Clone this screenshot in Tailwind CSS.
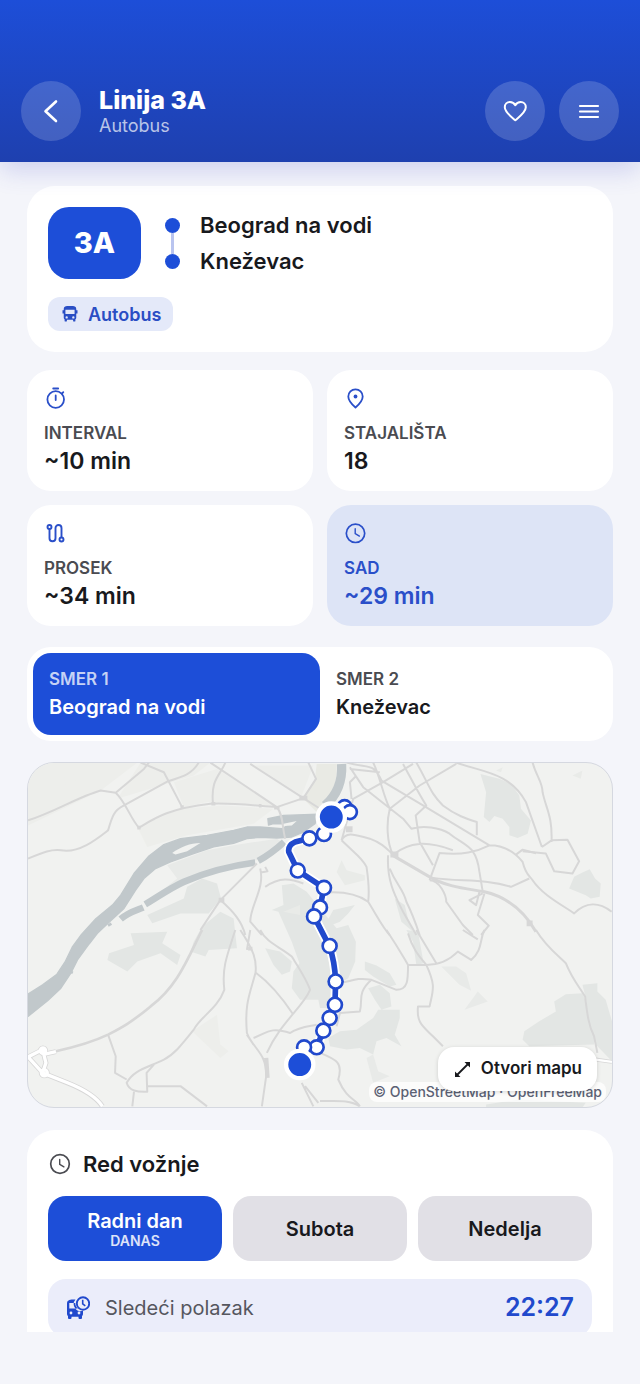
<!DOCTYPE html>
<html lang="sr-Latn">
<head>
<meta charset="utf-8">
<meta name="viewport" content="width=device-width, initial-scale=1">
<title>Linija 3A</title>
<script src="https://cdn.jsdelivr.net/npm/@tailwindcss/browser@4"></script>
</head>
<body class="flex h-screen flex-col bg-[#f4f5fa] font-['Inter','Liberation_Sans',sans-serif] text-[#18191d]">

<header class="relative z-10 flex shrink-0 items-center gap-3.5 bg-linear-to-b from-[#1d4ed8] to-[#1e40af] px-[21px] pt-[81px] pb-[21px] text-white shadow-[0_8px_24px_rgba(55,65,200,0.2)]">
  <button aria-label="Nazad" class="flex size-[60px] items-center justify-center rounded-full bg-white/17">
    <svg class="size-6" viewBox="0 0 24 24" fill="none" stroke="currentColor" stroke-width="2.6" stroke-linecap="round" stroke-linejoin="round"><path d="M17 2.500 6.500 12.300 17 22"/></svg>
  </button>
  <div class="flex-1 pt-0.5 pl-1">
    <h1 class="text-[25px] leading-7 font-extrabold">Linija 3A</h1>
    <p class="text-[18px] leading-6 text-white/70">Autobus</p>
  </div>
  <button aria-label="Omiljeno" class="flex size-[60px] items-center justify-center rounded-full bg-white/17">
    <svg class="size-6" viewBox="0 0 24 24" fill="none" stroke="currentColor" stroke-width="2" stroke-linejoin="round"><path d="M12.300 21.300C8 17.500 1.800 13 1.800 8.200C1.800 5.200 4.100 3 6.900 3C9.200 3 11.200 4.200 12.300 6.200C13.400 4.200 15.400 3 17.700 3C20.500 3 22.800 5.200 22.800 8.200C22.800 13 16.600 17.500 12.300 21.300Z"/></svg>
  </button>
  <button aria-label="Meni" class="flex size-[60px] items-center justify-center rounded-full bg-white/17">
    <svg class="size-6" viewBox="0 0 24 24" fill="none" stroke="currentColor" stroke-width="2.200" stroke-linecap="round"><path d="M3 7h18M3 12.500h18M3 18h18"/></svg>
  </button>
</header>

<main class="flex min-h-0 flex-1 flex-col overflow-hidden px-[27px] pt-6">

  <section class="shrink-0 rounded-[28px] bg-white p-[21px]">
    <div class="flex items-center">
      <div class="flex h-[72px] w-[93px] items-center justify-center rounded-[21px] bg-[#1d4ed8] text-[29px] font-extrabold text-white">3A</div>
      <div class="ml-6 flex flex-col items-center" aria-hidden="true">
        <span class="size-[15px] rounded-full bg-[#1d4ed8]"></span>
        <span class="h-[21px] w-[3px] bg-[#b9c4ef]"></span>
        <span class="size-[15px] rounded-full bg-[#1d4ed8]"></span>
      </div>
      <div class="ml-5 text-[22px] leading-9 font-semibold">
        <p>Beograd na vodi</p>
        <p>Kneževac</p>
      </div>
    </div>
    <div class="mt-[18px] flex">
      <span class="flex h-[34px] items-center gap-2 rounded-xl bg-[#e4e9f9] px-3 text-[18px] font-semibold text-[#2a4ec4]">
        <svg class="size-5" viewBox="0 0 24 24" fill="currentColor"><path fill-rule="evenodd" d="M17.500 12h-11V7h11zM16 17.500a1.400 1.400 0 1 1 0-2.800 1.400 1.400 0 0 1 0 2.800zM8 17.500a1.400 1.400 0 1 1 0-2.800 1.400 1.400 0 0 1 0 2.800zM4.500 16.500c0 .88.390 1.400 1 1.900V20a1 1 0 0 0 1 1h.8a1 1 0 0 0 1-1v-1h7.400v1a1 1 0 0 0 1 1h.8a1 1 0 0 0 1-1v-1.600c.61-.5 1-1.020 1-1.900V6c0-2.600-2-3.500-4-3.500h-7c-2 0-4 .9-4 3.500z"/><path d="M3 7.500h2v4H3zM19 7.500h2v4h-2z"/></svg>
        Autobus
      </span>
    </div>
  </section>

  <section class="mt-[18px] grid shrink-0 grid-cols-2 gap-3.5">
    <div class="rounded-3xl bg-white px-[17px] pt-[17px] pb-4">
      <svg class="size-6 text-[#2a4fc9]" viewBox="0 0 24 24" fill="none" stroke="currentColor" stroke-width="1.800" stroke-linecap="round"><circle cx="11.700" cy="12.500" r="8.300"/><path d="M9.200 1.500h5M11.700 8.500v4.500M18 6.500l1.300-1.300"/></svg>
      <p class="mt-2.5 text-[17px] leading-6 font-semibold text-[#4a4b51]">INTERVAL</p>
      <p class="mt-0.5 text-[23px] leading-7 font-semibold">~10 min</p>
    </div>
    <div class="rounded-3xl bg-white px-[17px] pt-[17px] pb-4">
      <svg class="size-6 text-[#2a4fc9]" viewBox="0 0 24 24" fill="none" stroke="currentColor" stroke-width="1.800" stroke-linejoin="round"><path d="M11.500 20.500C8 17.500 4.300 13.500 4.300 9.500a7.200 7.200 0 0 1 14.400 0C18.700 13.500 15 17.500 11.500 20.500Z"/><circle cx="11.500" cy="9.500" r="1.900" fill="currentColor" stroke="none"/></svg>
      <p class="mt-2.5 text-[17px] leading-6 font-semibold text-[#4a4b51]">STAJALIŠTA</p>
      <p class="mt-0.5 text-[23px] leading-7 font-semibold">18</p>
    </div>
    <div class="rounded-3xl bg-white px-[17px] pt-[17px] pb-4">
      <svg class="size-6 text-[#2a4fc9]" viewBox="0 0 24 24" fill="none" stroke="currentColor" stroke-width="1.900"><circle cx="5.500" cy="5" r="2"/><circle cx="17.500" cy="17.500" r="2"/><path d="M5.500 7v9.200a3 3 0 0 0 6 0V6a3 3 0 0 1 6 0V15.500"/></svg>
      <p class="mt-2.5 text-[17px] leading-6 font-semibold text-[#4a4b51]">PROSEK</p>
      <p class="mt-0.5 text-[23px] leading-7 font-semibold">~34 min</p>
    </div>
    <div class="rounded-3xl bg-[#dde4f6] px-[17px] pt-[17px] pb-4 text-[#2a4fc9]">
      <svg class="size-6" viewBox="0 0 24 24" fill="none" stroke="currentColor" stroke-width="1.700" stroke-linecap="round"><circle cx="11.500" cy="11.300" r="9.200"/><path stroke-width="1.400" d="M11.200 6.800v4.800l4.200 2.500"/></svg>
      <p class="mt-2.5 text-[17px] leading-6 font-semibold">SAD</p>
      <p class="mt-0.5 text-[23px] leading-7 font-semibold">~29 min</p>
    </div>
  </section>

  <section class="mt-[21px] grid shrink-0 grid-cols-2 rounded-3xl bg-white p-1.5">
    <button aria-pressed="true" class="rounded-[18px] bg-[#1d4ed8] px-4 py-3.5 text-left text-white">
      <span class="block text-[17px] leading-6 font-semibold text-white/75">SMER 1</span>
      <span class="mt-0.5 block text-[20px] leading-7 font-semibold">Beograd na vodi</span>
    </button>
    <button aria-pressed="false" class="rounded-[18px] px-4 py-3.5 text-left">
      <span class="block text-[17px] leading-6 font-semibold text-[#4a4b51]">SMER 2</span>
      <span class="mt-0.5 block text-[20px] leading-7 font-semibold">Kneževac</span>
    </button>
  </section>

  <section class="relative mt-[21px] h-[346px] shrink-0 overflow-hidden rounded-[27px] border border-[#d5d8e0] bg-[#f1f2f0]">
    <svg class="size-full" viewBox="21 21 1758 1038" preserveAspectRatio="xMidYMid slice" fill="none" aria-label="Mapa linije" role="img">
      <!-- built-up areas and parks -->
      <g fill="#edeeeb">
        <path d="M21 210 240 105 350 21H21ZM290 130 520 60 570 21H360ZM350 215 480 160 610 150 760 160 700 205 500 240 380 275ZM460 80 590 40 760 150 560 140 490 155ZM700 30H880L845 120Z"/>
        <path fill="#e8eae8" d="M470 370 440 330 560 285 640 270 770 250 790 262 710 315 600 335 500 370 400 425Z"/>
        <path d="M130 65 160 55 165 80 135 88ZM590 780 600 870 625 890 600 910 515 830Z"/>
      </g>
      <path fill="#e9eae4" d="M890 25H950C953 80 935 120 915 140L890 170 850 130 885 70Z"/>
      <g fill="#e3e6e4">
        <path d="M380 480 490 430 500 395 545 370 590 385 602 430 565 475 480 475 395 505ZM520 560 545 515 600 470 640 490 650 580 565 585 555 605 510 590Z"/>
        <path d="M330 535 440 530 425 565 480 600 470 630 420 595 350 620 320 650 260 615 265 595 340 570Z"/>
        <path d="M785 390 820 385 860 410 900 460 950 520 985 510 1008 560 1006 620 985 670 950 690 925 760 900 760 895 735 840 735 815 700 820 650 838 625 815 560 775 470 755 465 790 450Z"/>
        <path d="M735 580 780 590 815 620 810 650 785 660 760 630Z"/>
        <path d="M1383 55 1440 70 1475 85 1500 120 1505 160 1535 195 1525 235 1495 248 1470 240 1470 215 1450 190 1425 182 1410 200 1393 185 1400 110Z"/>
        <path d="M1665 365 1690 352 1712 342 1728 370 1745 385 1742 425 1715 430 1700 420 1650 400Z"/>
        <path d="M1035 620 1070 632 1110 655 1130 690 1110 695 1060 665 1035 645ZM1045 700 1080 690 1110 715 1115 755 1085 765 1065 735ZM925 850 960 830 1010 825 1060 790 1075 765 1140 765 1140 790 1125 840 1145 875 1100 850 1070 860 1060 900 1020 880 980 885 930 875Z"/>
        <path fill="#e8eae8" d="M1265 635 1310 635 1340 655 1355 708 1320 690ZM1335 765 1375 710 1405 740ZM1040 910 1060 900 1075 950 1110 965 1060 985Z"/>
        <path d="M1510 855 1515 830 1560 800 1610 770 1605 740 1640 718 1690 715 1705 750 1730 760 1725 870 1530 875ZM1690 690 1735 685 1735 710 1760 735 1779 800V920L1730 870 1700 730Z"/>
        <path d="M1160 525 1195 530 1212 625 1190 630 1180 560ZM1125 430 1155 450 1165 490 1180 530 1145 500ZM910 520 940 465 1005 450 985 475 960 500ZM1400 1050 1500 1035 1700 1045 1690 1059H1400Z"/>
        <path fill="#e9ebe8" d="M950 350 965 315 980 345 1035 360 1035 375 975 390ZM790 470 840 450 840 480ZM1430 45 1450 35 1445 50ZM1660 60 1690 45 1685 70Z"/>
      </g>
      <!-- rivers -->
      <g>
        <path fill="#c1c8cb" stroke="#c1c8cb" stroke-width="4" stroke-linejoin="round" d="M21 718 65 690 108 658 132 622 155 575 182 538 225 491 275 450 300 420 340 355 385 302 430 268 480 250 560 240 640 225 680 215 720 215 785 220 815 205 760 205 745 209 743 190 790 180 895 176 885 205 850 230 815 245 770 248 720 246 680 250 640 264 580 275 520 295 450 320 405 340 370 370 345 405 310 460 270 497 230 535 205 567 170 615 150 655 120 700 80 738 21 785Z"/>
        <path fill="#f1f2f0" d="M455 293C480 275 510 263 540 263L500 288 465 298ZM790 205 830 197 815 210 790 212Z"/>
        <path stroke="#c1c8cb" stroke-width="20" d="M300 492C325 470 350 465 368 457M374 448C420 420 450 398 490 380C560 350 630 332 705 322M714 317C745 300 770 280 792 260"/>
        <path stroke="#c1c8cb" stroke-width="28" d="M915 150C950 120 968 80 965 25"/>
        <path stroke="#c1c8cb" stroke-width="8" d="M262 512 272 506M148 650 156 654"/>
      </g>
      <!-- streets, north-west -->
      <g stroke="#d7d7d7" stroke-width="6" stroke-linejoin="round">
        <path d="M21 195C100 170 170 125 240 105L285 112C315 140 330 190 355 217M285 112 370 40 385 21M21 310C70 290 90 282 120 285C175 295 230 250 262 225C275 180 280 165 310 150L440 78C490 62 515 55 535 21M360 21 430 50 485 155M355 217C400 190 440 160 570 145C640 142 700 150 770 155L850 128 888 70 865 21M570 21 770 155M615 21C600 60 570 70 578 145M690 25 850 128 900 160M770 155C790 180 785 210 795 250M710 325 600 435 540 525M600 435C640 470 665 500 675 540M720 340C735 400 690 450 690 500L725 540M735 395C780 365 810 370 850 385M735 335 742 348 722 352"/>
        <path stroke-width="14" d="M838 128H862M595 435H612"/>
        <path stroke-width="11" d="M573 145H585M480 155H490M716 151H724M350 217H360M762 157H778"/>
      </g>
      <!-- streets, north-east -->
      <g transform="translate(900 0)" stroke="#d7d7d7" stroke-width="6" stroke-linejoin="round">
        <path d="M80 21C150 40 160 20 185 75L310 150 510 270M160 21C180 60 190 120 210 160C200 200 200 260 220 298M210 160 300 90 410 25M65 255 100 130 190 80 280 25M65 255C80 225 110 240 150 250C190 265 200 280 220 298M65 255C100 290 130 310 140 335C145 370 150 400 145 440C170 480 190 520 210 540M90 35 130 95 250 190 275 220C310 210 360 215 390 235C440 275 470 270 480 350L490 410M250 25C280 80 300 120 320 150L288 180 300 260 340 330M290 21C330 90 330 110 370 150C410 180 440 190 472 200V240M410 21C490 50 570 50 620 140L668 275M640 21C650 60 670 80 670 110C680 160 700 180 697 260M668 275 697 255 745 253 780 318 760 355 705 348 680 295 610 288M510 270C560 270 590 295 610 320C620 360 630 360 640 375C670 420 730 450 765 475C800 440 840 440 878 470M510 270C470 290 430 300 360 293L330 375M220 298C270 260 320 255 400 285M90 40 180 50M95 130 90 80 110 60"/>
        <path d="M210 340C230 390 250 400 260 440C280 480 290 510 300 540M205 300C200 380 230 430 250 470L290 540M330 375C360 375 380 420 380 440L430 510 460 540M340 368C420 380 500 370 575 395L630 370M145 440C110 415 70 410 25 412M490 415 450 435 470 450 480 410M495 415 475 480 508 512 485 540M590 298 610 283 650 294"/>
        <path stroke-width="9" d="M215 298 330 365C380 395 440 400 495 410C560 425 610 460 650 530"/>
        <path stroke-width="18" d="M212 298H236M622 505H640M78 222H98"/>
      </g>
      <!-- streets, south-west -->
      <g transform="translate(0 525)" stroke="#d7d7d7" stroke-width="6" stroke-linejoin="round">
        <path stroke-width="8" d="M545 0C500 90 470 170 390 230C330 280 300 295 262 315C210 340 150 355 105 365"/>
        <path d="M645 0C615 90 605 120 612 180C590 240 540 260 520 300C480 350 460 375 430 390C380 415 340 420 318 460C325 485 350 488 380 487L378 430 400 405M262 315 285 380 283 430 318 450M380 470H480L560 531M340 487 335 531M660 0C700 60 710 90 706 128C690 190 672 220 680 310C700 360 740 370 738 440L725 531M690 0 680 60M706 128C750 160 790 210 820 255M720 0C740 40 780 50 815 80C840 120 860 150 870 180C850 230 780 280 740 370M700 325C740 310 750 290 810 310C840 290 870 290 890 285M680 315 700 345M845 460 880 531M855 470 895 520"/>
        <path stroke-width="13" d="M738 385 742 445M690 50V62"/>
        <g stroke="#d7d7d7" stroke-width="15" stroke-linejoin="round">
          <path d="M21 382 65 360 75 400 65 430M21 382 65 430 140 460C190 480 225 500 245 531M65 375 105 366"/>
          <circle cx="66" cy="363" r="8"/><circle cx="70" cy="430" r="9"/>
        </g>
        <g stroke="#ffffff" stroke-width="10" stroke-linejoin="round">
          <path d="M21 382 65 360 75 400 65 430M21 382 65 430 140 460C190 480 225 500 245 531M65 375 105 366"/>
          <circle cx="66" cy="363" r="8"/><circle cx="70" cy="430" r="9"/>
        </g>
      </g>
      <!-- streets, south-east -->
      <g transform="translate(900 525)" stroke="#d7d7d7" stroke-width="6" stroke-linejoin="round">
        <path d="M200 0C240 60 250 80 265 105C265 150 265 180 230 180L155 150C100 140 90 160 50 160M155 150C110 190 130 210 120 245L60 250 50 290M265 105H320C360 105 390 90 415 65L455 90C490 60 480 30 495 0M265 10C280 60 300 80 320 105C350 170 340 180 330 230H295C290 280 310 290 340 320L370 350M290 0 350 100M430 0 475 28M650 0C680 50 720 80 740 100C760 150 780 170 798 200C805 260 810 290 825 320L835 370M0 370C50 390 70 400 55 450C80 510 110 510 120 531M0 515C50 515 90 510 120 531"/>
        <path stroke-width="12" d="M830 390 879 397"/><path stroke="#fff" stroke-width="7" d="M830 390 879 397"/>
      </g>
      <!-- line 3A -->
      <g stroke-linejoin="round" stroke-linecap="round">
        <path stroke="#ffffff" stroke-width="28" d="M988 168 934 185 912 235 868 249 825 260Q803 270 806 290L833 346 912 398 900 457 882 484 928 573Q945 620 947 680L945 750 929 790 910 828 890 878 852 878 839 930"/>
        <path stroke="#2149cc" stroke-width="17" d="M988 168 934 185 912 235 868 249 825 260Q803 270 806 290L833 346 912 398 900 457 882 484 928 573Q945 620 947 680L945 750 929 790 910 828 890 878 852 878 839 930"/>
      </g>
      <g fill="#ffffff" stroke="#2149cc" stroke-width="8">
        <circle cx="974" cy="155" r="21"/><circle cx="990" cy="170" r="21"/><circle cx="912" cy="236" r="21"/><circle cx="868" cy="249" r="21"/><circle cx="833" cy="346" r="21"/><circle cx="912" cy="398" r="21"/><circle cx="900" cy="457" r="21"/><circle cx="882" cy="484" r="21"/><circle cx="929" cy="573" r="21"/><circle cx="947" cy="680" r="21"/><circle cx="945" cy="750" r="21"/><circle cx="929" cy="790" r="21"/><circle cx="910" cy="828" r="21"/><circle cx="890" cy="878" r="21"/><circle cx="852" cy="878" r="21"/>
      </g>
      <g fill="#1d4ed8" stroke="#ffffff" stroke-width="13">
        <circle cx="934" cy="185" r="41"/><circle cx="839" cy="930" r="41"/>
      </g>
    </svg>
    <p class="absolute right-1.5 bottom-[5px] rounded-lg bg-white/75 px-1 text-[14px] leading-5 font-medium text-[#5b6174]">© OpenStreetMap · OpenFreeMap</p>
    <button class="absolute right-[15px] bottom-4 flex h-11 items-center gap-2 rounded-2xl bg-white px-[15px] text-[17px] font-semibold shadow-[0_1px_4px_rgba(0,0,0,0.15)]">
      <svg class="size-5" viewBox="0 0 20 20" fill="currentColor" stroke="currentColor" stroke-width="1.800"><path d="M4 16 15 5"/><path stroke="none" d="M11.500 3H17v5.500zM2 12.500V18h5.500z"/></svg>
      Otvori mapu
    </button>
  </section>

  <section class="mt-[22px] shrink-0 rounded-[28px] bg-white p-[21px]">
    <h2 class="flex items-center gap-[11px] text-[22px] leading-[26px] font-semibold">
      <svg class="size-6 text-[#4a4b51]" viewBox="0 0 24 24" fill="none" stroke="currentColor" stroke-width="1.700" stroke-linecap="round"><circle cx="12" cy="12" r="9.300"/><path stroke-width="1.400" d="M11.700 7.500v4.800l4.200 2.500"/></svg>
      Red vožnje
    </h2>
    <div class="mt-[19px] grid grid-cols-3 gap-[11px] text-[20px] font-semibold">
      <button aria-pressed="true" class="flex h-[65px] flex-col items-center justify-center rounded-[18px] bg-[#1d4ed8] text-white">
        <span class="leading-6">Radni dan</span>
        <span class="text-[14px] leading-4 text-white/85">DANAS</span>
      </button>
      <button aria-pressed="false" class="h-[65px] rounded-[18px] bg-[#e1e0e6]">Subota</button>
      <button aria-pressed="false" class="h-[65px] rounded-[18px] bg-[#e1e0e6]">Nedelja</button>
    </div>
    <div class="mt-[18px] flex h-[58px] items-center rounded-[18px] bg-[#ebedfa] px-[18px]">
      <svg class="size-6 text-[#2149cc]" viewBox="0 0 24 24" fill="currentColor"><path fill-rule="evenodd" d="M9.500 3.500H7C3 3.500 1 4.500 1 7.500V18c0 .9.400 1.600 1 2.100V22a1 1 0 0 0 1 1h1.500a1 1 0 0 0 1-1v-1.300h7V22a1 1 0 0 0 1 1H15a1 1 0 0 0 1-1v-1.900c.6-.5 1-1.200 1-2.100v-3.300A7 7 0 0 1 9.500 3.500zM3.300 7h5.900c.1 2.200 1 4 2.500 5.500H3.300zM5 18.400a1.400 1.400 0 1 1 0-2.800 1.400 1.400 0 0 1 0 2.800zM13 18.400a1.400 1.400 0 1 1 0-2.800 1.400 1.400 0 0 1 0 2.800z"/><circle cx="17" cy="7.500" r="6.200" fill="#ebedfa" stroke="currentColor" stroke-width="1.900"/><path fill="none" stroke="currentColor" stroke-width="1.600" d="M16.700 3.800v4l2.600 2"/></svg>
      <span class="ml-[15px] flex-1 text-[20px] text-[#55565e]">Sledeći polazak</span>
      <time class="text-[25px] font-semibold text-[#2149cc]">22:27</time>
    </div>
  </section>
</main>

<footer class="h-[52px] shrink-0"></footer>
</body>
</html>
